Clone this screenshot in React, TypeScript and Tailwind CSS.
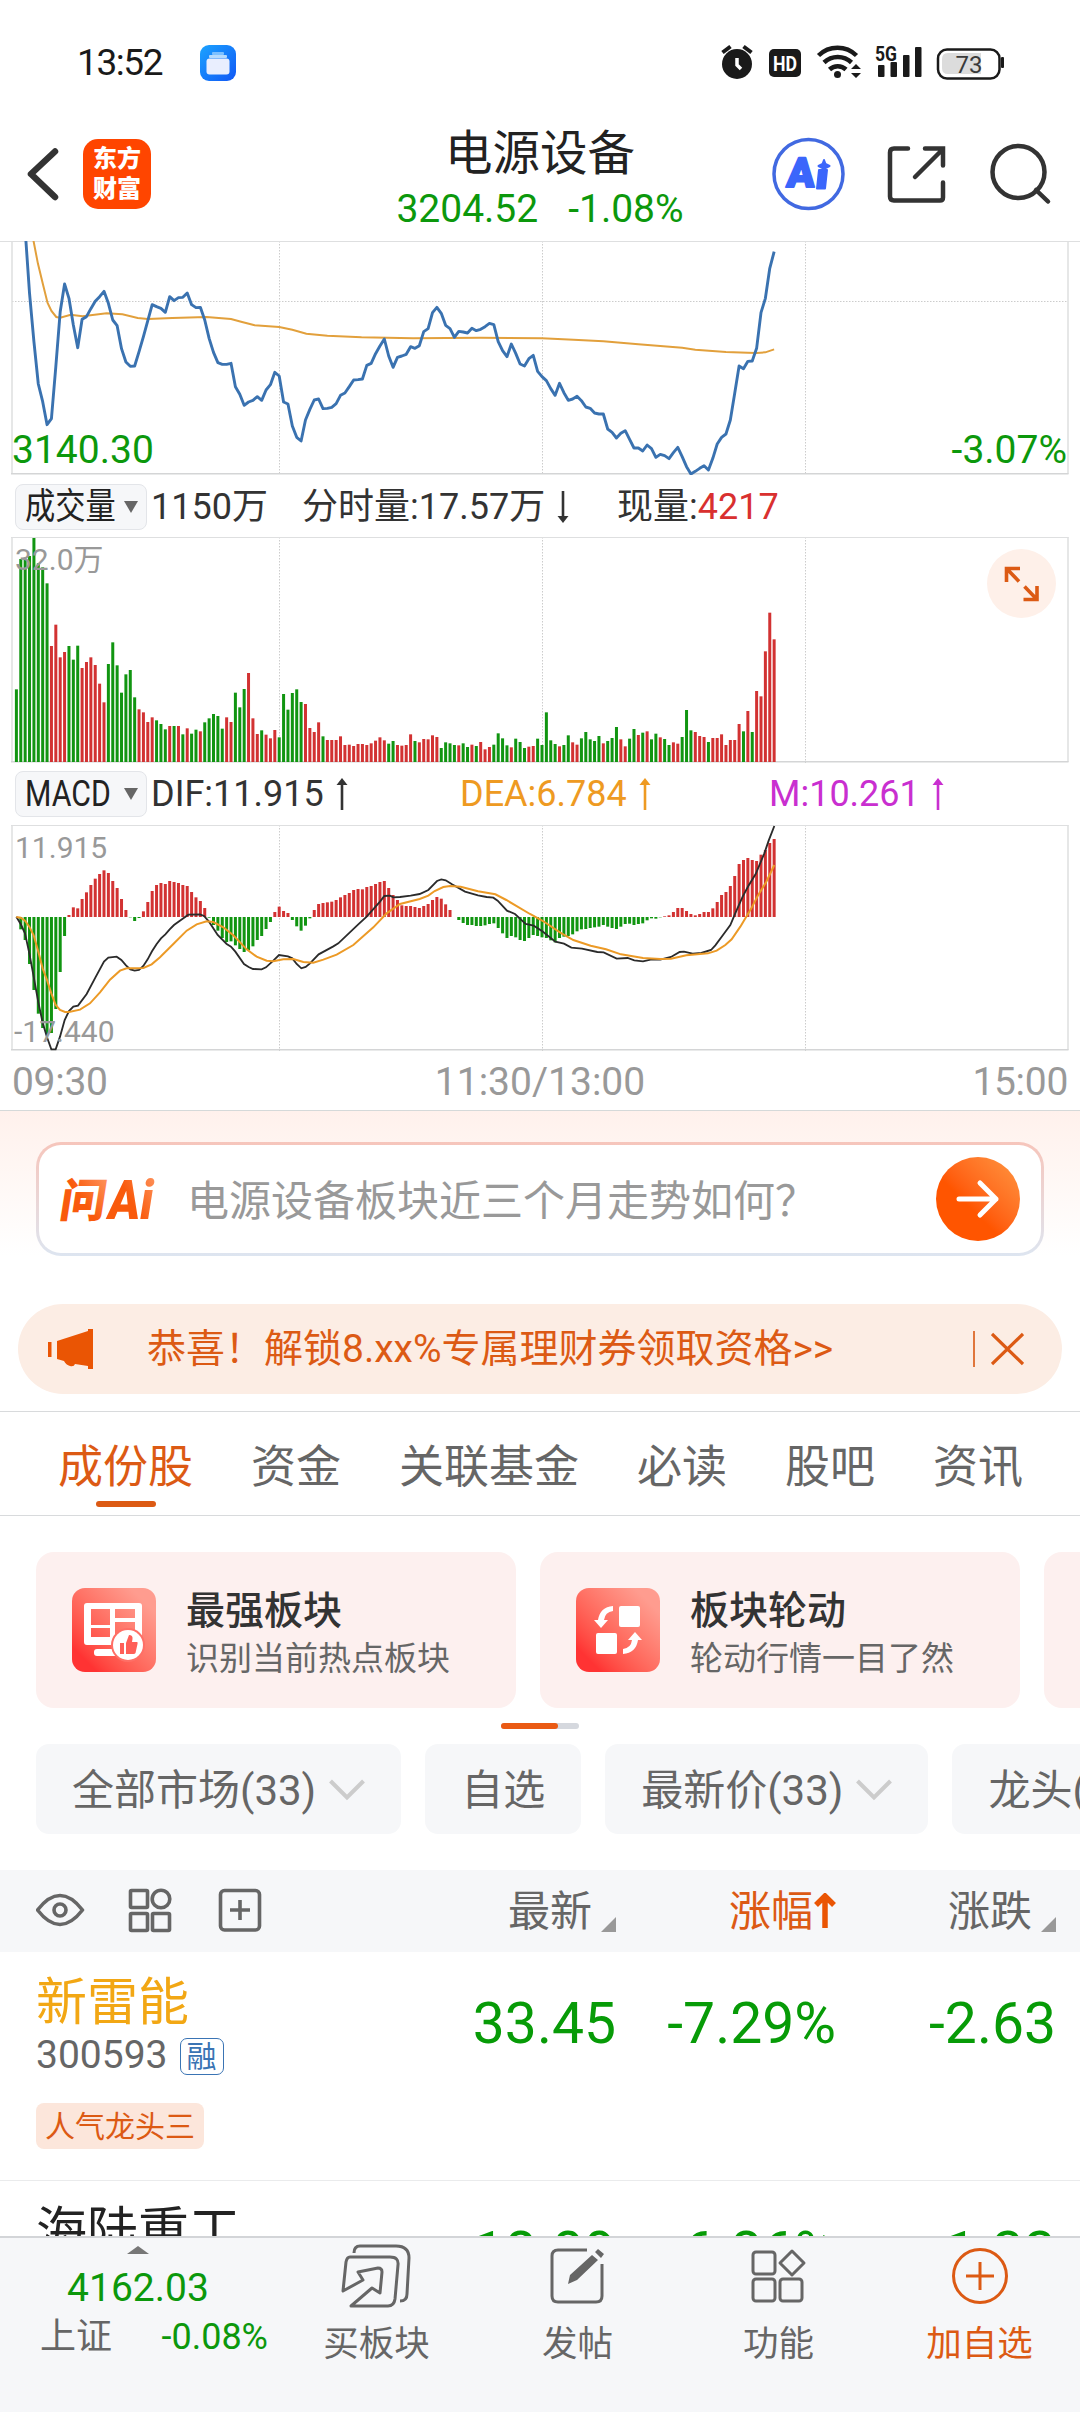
import type { ReactNode } from 'react'
import clsx from 'clsx'

// Minute data. Values are vertical positions in thirds of a pixel.
const STEP = 4.38
const X0 = 16.4

const price = [
    -400, -250, 0, 190, 335, 462, 515, 584, 566, 410, 245, 162, 205, 285, 353, 268, 260, 236, 214, 200,
    184, 220, 270, 287, 356, 396, 409, 408, 365, 320, 272, 224, 230, 235, 247, 200, 212, 203, 202, 189,
    224, 233, 232, 270, 325, 367, 398, 403, 403, 400, 470, 493, 526, 516, 511, 500, 511, 480, 464, 427,
    438, 516, 522, 588, 622, 633, 570, 538, 510, 507, 536, 535, 532, 521, 496, 489, 470, 450, 449, 447,
    406, 400, 371, 348, 327, 378, 412, 382, 378, 373, 350, 355, 347, 305, 296, 248, 232, 250, 286, 296,
    322, 304, 306, 309, 295, 302, 298, 290, 280, 284, 335, 362, 380, 342, 370, 402, 408, 386, 376, 424,
    440, 452, 476, 496, 460, 488, 511, 507, 499, 512, 531, 535, 549, 552, 552, 597, 607, 624, 610, 602,
    628, 654, 654, 663, 645, 656, 682, 673, 677, 686, 668, 652, 680, 710, 732, 724, 715, 707, 720, 685,
    642, 622, 612, 570, 490, 408, 416, 394, 393, 355, 248, 205, 115, 65
]

const average = [
    [3.9, 32], [4.9, 100], [6.1, 165], [7.1, 218], [8, 243], [9.1, 261], [10, 263], [12.4, 254], [15.1, 259],
    [20.6, 250], [24.2, 253], [27.7, 264], [30, 267], [35.6, 264], [43.4, 261], [49, 267], [51.3, 275],
    [54.4, 286], [60, 291], [63, 299], [66.2, 311], [71, 317], [78.8, 322], [90.6, 325], [106, 323], [120, 325],
    [127.2, 329], [134, 334], [142, 343], [152, 353], [155, 359], [162, 366], [167, 368], [169, 369], [171, 367], [173, 358]
]

// negative = falling minute (green), positive = rising minute (red)
const volumes = [
    -478, -87, -90, -78, -24, -100, -112, -160, 348, 284, 382, 366, -348, -389, -347, 414, 396, 382, 405, 461,
    517, -402, -337, -406, -488, -433, -420, -502, 538, 547, 576, 562, -571, -582, -598, 588, -588, 588, -613, 595,
    -611, -599, 604, -577, -565, -552, -558, -596, 562, 576, -488, -532, -477, 429, 565, 612, -601, 614, 625, 600,
    -622, -492, -539, -489, -478, -516, 522, 594, 606, 577, -619, 630, 630, 630, 619, 645, 644, 648, 642, 642,
    645, 640, 632, 622, 631, -641, -633, 645, 647, 645, 613, -633, 637, 627, 628, 616, 621, -654, -637, -640,
    -645, 646, -640, -651, 644, -648, 636, 658, 651, -644, -610, -625, -646, 652, -626, -636, -654, 650, 648, -626,
    -645, -547, -631, -642, 649, -645, -616, 637, 644, -625, -606, -628, -633, -618, 640, -633, -624, -591, 628, 649,
    -626, -597, 615, -608, 604, -628, -611, 622, -627, -645, 637, 641, -621, -540, -601, 606, 618, 621, -636, 624,
    624, 613, 645, 630, 630, 582, -604, 543, -606, 483, 499, 364, 248, 328
]

const macd = [
    321, 358, 390, 462, 540, 611, 654, 672, 669, 597, 486, 378, 315, 292, 295, 267, 247, 225, 206, 192,
    181, 189, 213, 234, 267, 300, 322, 333, 324, 304, 276, 243, 225, 219, 222, 213, 216, 219, 225, 228,
    246, 262, 273, 294, 323, 345, 362, 384, 396, 394, 406, 417, 426, 421, 409, 390, 378, 357, 336, 306,
    290, 303, 309, 330, 349, 362, 347, 325, 300, 282, 279, 277, 275, 270, 262, 255, 249, 240, 237, 238,
    231, 228, 222, 216, 213, 234, 255, 270, 286, 288, 288, 291, 294, 288, 282, 270, 261, 266, 283, 300,
    321, 330, 339, 345, 345, 348, 348, 346, 342, 340, 354, 370, 384, 378, 382, 390, 393, 384, 375, 378,
    382, 384, 391, 397, 384, 380, 378, 373, 364, 358, 357, 354, 352, 350, 345, 350, 354, 357, 350, 342,
    341, 345, 342, 340, 331, 325, 326, 322, 319, 316, 306, 294, 294, 303, 312, 316, 312, 306, 306, 295,
    276, 255, 246, 228, 198, 162, 150, 144, 150, 153, 134, 120, 99, 87
]

const dif =
    '49,320 62,342 75,370 88,430 101,500 115,577 128,638 141,682 154,718 167,718 180,680 194,630 207,603 220,590 234,587 260,552 286,503 312,455 325,443 350,440 364,450 378,466 391,478 404,482 417,480 430,468 443,448 456,424 470,402 483,385 496,373 509,358 522,345 548,326 565,314 600,313 612,318 627,335 653,375 680,402 693,410 706,425 732,462 746,471 759,477 785,478 798,472 820,452 837,435 864,439 877,445 890,462 904,475 917,471 930,460 956,433 1000,409 1015,400 1074,344 1100,320 1140,275 1153,258 1170,257 1180,262 1200,261 1232,257 1259,252 1285,240 1311,213 1324,208 1337,211 1356,223 1395,245 1434,256 1460,261 1480,263 1493,272 1521,302 1545,312 1577,342 1601,347 1627,364 1666,395 1692,401 1714,413 1746,416 1792,426 1811,427 1850,446 1883,444 1903,451 1929,454 1955,448 1981,449 2013,441 2039,426 2052,425 2078,431 2104,429 2133,420 2146,406 2169,375 2191,345 2208,305 2228,260 2245,228 2267,192 2293,130 2306,92 2323,48'
const dea =
    '49,321 62,323 75,332 88,350 101,376 115,425 128,475 141,510 154,550 167,585 180,600 195,606 207,606 240,599 270,580 300,547 330,509 360,482 380,475 400,475 430,474 455,463 480,442 520,402 560,362 590,343 620,334 640,336 670,352 700,376 740,418 770,440 800,452 820,454 850,448 880,447 910,456 940,458 970,449 1010,434 1060,405 1120,352 1160,310 1200,282 1259,267 1285,257 1304,243 1330,231 1350,228 1382,230 1434,244 1486,253 1519,270 1590,312 1629,333 1681,368 1720,390 1772,407 1818,418 1863,433 1929,444 1981,447 2013,446 2059,436 2124,430 2150,422 2176,405 2195,388 2221,350 2254,295 2273,258 2299,215 2323,165'

const GREEN = '#119511'
const RED = '#d23232'

const StatusBar = () => (
    <div className="flex h-[96px] items-start pl-[77px] pr-[76px] pt-[41px] text-[#1a1a1a]">
        <span className="w-[123px] text-[37px] leading-[43px] tracking-[-1.4px]">13:52</span>
        <svg className="mt-1" width="36" height="36" viewBox="0 0 36 36">
            <defs>
                <linearGradient id="app" x1="0" y1="0" x2="1" y2="1">
                    <stop offset="0" stopColor="#1ba3ff" />
                    <stop offset="1" stopColor="#1157f5" />
                </linearGradient>
            </defs>
            <rect width="36" height="36" rx="9" fill="url(#app)" />
            <rect x="12" y="7" width="12" height="3" rx="1" fill="#7cc0ff" />
            <rect x="9" y="10" width="18" height="3" rx="1" fill="#b5dafd" />
            <rect x="6.500" y="13.500" width="23" height="16" rx="3" fill="#e9eefe" />
        </svg>
        <svg className="ml-auto" width="284" height="44" viewBox="720 41 284 44">
            <g fill="#1a1a1a">
                <circle cx="737" cy="64" r="15" />
                <path d="M722.500 52.500l8-6M751.500 52.500l-8-6" stroke="#1a1a1a" strokeWidth="4" />
                <rect x="769" y="49" width="32" height="28" rx="5" />
                <circle cx="837.500" cy="74.500" r="3.500" />
                <rect x="878" y="65" width="6.500" height="12" rx="1" />
                <rect x="890.500" y="62" width="6.500" height="15" rx="1" />
                <rect x="903" y="55" width="6.500" height="22" rx="1" />
                <rect x="915" y="47" width="6.500" height="30" rx="1" />
                <path d="M851 69l5-5 5 5zM851 73l5 5 5-5z" />
                <rect x="1001" y="57" width="3" height="11" rx="1" />
            </g>
            <path d="M737 58v7l4 4" fill="none" stroke="#fff" strokeWidth="3.500" />
            <g fill="none" stroke="#1a1a1a" strokeWidth="4.500">
                <path d="M818.500 55.500a27 27 0 0 1 38 0M824 62.500a20 20 0 0 1 27.500 0M829.500 69.500a12 12 0 0 1 16.500 0" />
            </g>
            <text x="785" y="70.500" fontSize="20" fontWeight="700" fill="#fff" textAnchor="middle" textLength="24" lengthAdjust="spacingAndGlyphs">HD</text>
            <text x="875" y="60.500" fontSize="21" fontWeight="700" fill="#1a1a1a" textLength="22" lengthAdjust="spacingAndGlyphs">5G</text>
            <rect x="938" y="49.500" width="61.500" height="29" rx="9" fill="#fff" stroke="#1a1a1a" strokeWidth="2.500" />
            <path d="M981 53h-33q-6 0-6 6v9q0 6 6 6h33z" fill="#dcdcdc" />
            <text x="969" y="72.500" fontSize="24" fill="#3a3a3a" textAnchor="middle">73</text>
        </svg>
    </div>
)

const Header = () => (
    <div className="flex h-[145px] items-start justify-between pl-[24px] pr-[27px]">
        <div className="flex w-[372px] items-center pt-[43px]">
            <svg width="38" height="68" viewBox="24 140 38 68">
                <path d="M55 151.500l-24 22.500 24 23" fill="none" stroke="#333" strokeWidth="6.500" strokeLinecap="round" strokeLinejoin="round" />
            </svg>
            <div className="ml-[21px] flex h-[70px] w-[68px] flex-col items-center justify-center rounded-[15px] bg-[#ff4500] text-[24px] font-black leading-[30px] text-white">
                <span>东方</span>
                <span>财富</span>
            </div>
        </div>
        <div className="flex flex-col items-center pt-[28px]">
            <span className="text-[47.500px] leading-[60px] text-[#222]">电源设备</span>
            <div className="flex gap-[30px] text-[39px] leading-[50px] text-[#0c980c]">
                <span>3204.52</span>
                <span>-1.08%</span>
            </div>
        </div>
        <div className="flex w-[369px] justify-end pt-[40px]">
            <svg width="284" height="76" viewBox="769 136 284 76">
                <circle cx="808.500" cy="174" r="34.500" fill="#fff" stroke="#4169e1" strokeWidth="3.500" />
                <g fill="#3b66fb" stroke="#3b66fb" strokeLinejoin="round" strokeWidth="2">
                    <text x="786" y="187" fontSize="41" fontWeight="900" transform="skewX(-4)" style={{ transformOrigin: '786px 187px' }}>A</text>
                    <path d="M819 170h8l-2 18.500h-8z" />
                    <path d="M824 160l1.500 4 4 2-4 2-1.500 3.500-1.500-3.500-4-2 4-2z" />
                </g>
                <g fill="none" stroke="#333" strokeWidth="4.500" strokeLinecap="round">
                    <path d="M908 148.500h-14q-4 0-4 4v44q0 4 4 4h46q3 0 3-3v-15M925 148.500h18v17M942 150l-27 27" />
                    <circle cx="1018.500" cy="172" r="26" />
                    <path d="M1036 190l12 11.500" />
                </g>
            </svg>
        </div>
    </div>
)

interface PlotProps {
    height: number
    strong?: boolean
    children?: ReactNode
}

// Plot frame with the three session quarter lines
const Plot = ({ height, strong, children }: PlotProps) => (
    <svg className="block" width="1080" height={height} viewBox={`0 0 1080 ${height}`}>
        <g stroke="#ccc" strokeWidth="1" strokeDasharray="1.500 1.500">
            <path d={`M279.500 0V${height}M542.500 0V${height}M805.500 0V${height}`} />
            {strong && <path d="M12 60.500H1068" />}
        </g>
        <path d={`M12 0V${height - 1}M1068 0V${height - 1}`} stroke="#dedfe0" strokeWidth="1.500" />
        <path d={`M11 ${height - 1.200}H1068.500`} stroke="#d4d5d6" strokeWidth="1.600" />
        <path d={strong ? 'M0 .5H1080' : 'M11 .5H1068.500'} stroke="#dedfe0" />
        {children}
    </svg>
)

const PriceChart = () => (
    <Plot height={234} strong>
        <polyline
            points={average.map(([i, y]) => `${X0 + i * STEP},${(y - 33) / 3}`).join(' ')}
            fill="none" stroke="#e2a03c" strokeWidth="2"
        />
        <polyline
            points={price.map((y, i) => `${X0 + i * STEP},${(y - 33) / 3}`).join(' ')}
            fill="none" stroke="#3a72b0" strokeWidth="2.900" strokeLinejoin="round"
        />
        <text x="12" y="222" fontSize="39" fill="#0c980c">3140.30</text>
        <text x="1067" y="222" fontSize="39" fill="#0c980c" textAnchor="end">-3.07%</text>
    </Plot>
)

const VolumeChart = () => (
    <Plot height={226}>
        {volumes.map((v, i) => {
            const top = (Math.abs(v) - 21) / 3
            return <rect key={i} x={X0 + i * STEP - 1.5} y={top} width="3" height={225 - top} fill={v < 0 ? GREEN : RED} />
        })}
        <text x="15" y="33" fontSize="30" fill="#999">32.0万</text>
        <circle cx="1021.500" cy="46.500" r="34.500" fill="#fef0e9" />
        <path d="M1006.500 45V31.500H1020M1007 32l12 12.500M1037 49v13.500H1023.500M1036.500 62l-12-12.500" fill="none" stroke="#dc5a14" strokeWidth="3.600" />
    </Plot>
)

const MacdChart = () => (
    <Plot height={226}>
        {macd.map((y, i) => (
            <rect
                key={i}
                x={X0 + i * STEP - 1.5}
                y={(Math.min(y, 321) - 45) / 3}
                width="3"
                height={Math.abs(y - 321) / 3}
                fill={y > 321 ? GREEN : RED}
            />
        ))}
        <g transform="scale(0.33333) translate(0 -45)" fill="none">
            <polyline points={dif} stroke="#2b2b2b" strokeWidth="5.500" />
            <polyline points={dea} stroke="#ec9a26" strokeWidth="6" />
        </g>
        <text x="15" y="33" fontSize="30" fill="#999">11.915</text>
        <text x="14" y="217" fontSize="30" fill="#999">-17.440</text>
    </Plot>
)

const Arrow = ({ down }: { down?: boolean }) => (
    <svg className={clsx('inline-block', down && 'rotate-180')} width="12" height="32" viewBox="0 0 12 32">
        <path d="M6 5v27" stroke="currentColor" strokeWidth="2.600" />
        <path d="M6 0l5.500 7h-11z" fill="currentColor" />
    </svg>
)

const IndicatorSelect = ({ label }: { label: string }) => (
    <button className="ml-[15px] mr-[4px] flex h-[46px] w-[132px] items-center justify-between rounded-lg border border-[#e3e5e9] bg-[#f6f7f9] pl-[9px] pr-[8px] text-[#222]">
        <span className="w-[88px] origin-left scale-x-[0.84] whitespace-nowrap">{label}</span>
        <svg width="14" height="12" viewBox="0 0 14 12"><path d="M0 0h14l-7 12z" fill="#666" /></svg>
    </button>
)

const Charts = () => (
    <div>
        <PriceChart />
        <div className="flex h-[62px] items-center pt-[1px] text-[36px] text-[#333]">
            <IndicatorSelect label="成交量" />
            <span className="w-[151px] whitespace-nowrap">1150万</span>
            <span className="flex w-[315px] items-center gap-[12px] whitespace-nowrap">分时量:17.57万<Arrow down /></span>
            <span>现量:<span className="text-[#d9302f]">4217</span></span>
        </div>
        <VolumeChart />
        <div className="flex h-[62px] items-center text-[36px] text-[#333]">
            <IndicatorSelect label="MACD" />
            <span className="flex w-[309px] items-center gap-[12px]">DIF:11.915<Arrow /></span>
            <span className="flex w-[309px] items-center gap-[12px] text-[#ee9a22]">DEA:6.784<Arrow /></span>
            <span className="flex items-center gap-[12px] text-[#c92fd0]">M:10.261<Arrow /></span>
        </div>
        <MacdChart />
        <div className="flex h-[60px] items-center justify-between border-b border-[#d5d9d9] pl-[12px] pr-[12px] pt-[3px] text-[39px] text-[#999]">
            <span className="w-[160px] tracking-[-0.3px]">09:30</span>
            <span>11:30/13:00</span>
            <span className="w-[160px] text-right tracking-[-0.3px]">15:00</span>
        </div>
    </div>
)

const AskAi = () => (
    <div className="h-[193px] bg-linear-to-b from-[#fff1ec] to-white to-75% px-[36px] pt-[31px]">
        <div className="rounded-[25px] bg-linear-to-b from-[#f6c5bb] to-[#dde5f0] p-[3px]">
            <div className="flex h-[108px] items-center rounded-[22px] bg-white pl-[12px] pr-[21px]">
                <svg width="116" height="76" viewBox="-6 -12 116 76">
                    <defs>
                        <linearGradient id="ask" x1="0" y1="1" x2="1" y2="0">
                            <stop offset="0.500" stopColor="#f95a0c" />
                            <stop offset="1" stopColor="#ff9d6b" />
                        </linearGradient>
                    </defs>
                    <g fill="url(#ask)" fontWeight="900" transform="skewX(-9) translate(5 0)">
                        <text x="3" y="44" fontSize="46">问</text>
                        <text x="51" y="46" fontSize="55" textLength="45" lengthAdjust="spacingAndGlyphs">Ai</text>
                    </g>
                </svg>
                <span className="ml-[20px] pt-[4px] text-[42px] text-[#999]">电源设备板块近三个月走势如何？</span>
                <div className="ml-auto flex h-[84px] w-[84px] items-center justify-center rounded-full bg-linear-to-bl from-[#ff8c38] from-10% to-[#ff5500] to-60%">
                    <svg width="44" height="40" viewBox="0 0 44 40">
                        <path d="M3 20h37M24 4l16 16-16 16" fill="none" stroke="#fff" strokeWidth="5" strokeLinecap="round" strokeLinejoin="round" />
                    </svg>
                </div>
            </div>
        </div>
    </div>
)

const Banner = () => (
    <div className="px-[18px] pb-[17px]">
        <div className="flex h-[90px] items-center rounded-full bg-[#fcede4] pl-[29px] pr-[38px] text-[#dc5a14]">
            <svg width="46" height="40" viewBox="0 0 46 40" fill="#ea5504">
                <path d="M1 13h3.500v15H1zM10 12L41 2V0h5v40h-5v-3l-13-2q-1 3-5 2t-6-5l-7-2z" />
            </svg>
            <span className="ml-[54px] text-[39px]">恭喜！解锁8.xx%专属理财券领取资格&gt;&gt;</span>
            <div className="ml-auto h-[36px] w-[2px] bg-[#e0763c]" />
            <svg className="ml-[16px]" width="33" height="34" viewBox="0 0 33 34">
                <path d="M1 2l31 30M32 2L1 32" stroke="#dc5a14" strokeWidth="3.200" />
            </svg>
        </div>
    </div>
)

const tabs = ['成份股', '资金', '关联基金', '必读', '股吧', '资讯']

const Tabs = () => (
    <div className="flex h-[105px] items-start justify-between border-y border-[#d8dadc] pl-[58px] pr-[57px] pt-[23px]">
        {tabs.map((tab, i) => (
            <div key={tab} className={clsx('flex flex-col items-center text-[45px] leading-[66px]', i === 0 ? 'text-[#dc5a14]' : 'text-[#666]')}>
                {tab}
                {i === 0 && <div className="h-[6px] w-[60px] rounded-full bg-[#dc5a14]" />}
            </div>
        ))}
    </div>
)

const IconBoard = () => (
    <svg width="84" height="84" viewBox="0 0 84 84">
        <path fill="#fff" fillRule="evenodd" d="M15 15h52q3 0 3 3v37q0 2-3 2H15q-3 0-3-3V18q0-3 3-3zM19 21v16h19V21zM43 21v9h20v-9zM19 40v9h19v-9zM43 34v13h20V34z" />
        <rect x="22" y="61" width="24" height="7" rx="3" fill="#fff" />
        <circle cx="56" cy="57" r="17" fill="#ff6f66" />
        <circle cx="56" cy="57" r="15" fill="#fff" />
        <path fill="#ff5f58" d="M48 55h4v11h-4zM54 55l3-8q4 0 3.500 4l-.5 3h5q1 0 .5 2l-2 9q-.5 1-2 1h-7.500z" />
    </svg>
)

const IconRotate = () => (
    <svg width="84" height="84" viewBox="0 0 84 84" fill="#fff">
        <rect x="43" y="18" width="21" height="21" rx="2" />
        <rect x="20" y="45" width="21" height="21" rx="2" />
        <path d="M37 18v5q-8 1-9 9h4l-7 8-7-8h4q2-13 15-14zM47 66v-5q8-1 9-9h-4l7-8 7 8h-4q-2 13-15 14z" />
    </svg>
)

const boards = [
    { title: '最强板块', desc: '识别当前热点板块', icon: <IconBoard /> },
    { title: '板块轮动', desc: '轮动行情一目了然', icon: <IconRotate /> },
    { title: '', desc: '', icon: null }
]

const Boards = () => (
    <div className="pl-[36px] pt-[36px]">
        <div className="flex gap-[24px]">
            {boards.map((b, i) => (
                <div key={i} className="flex h-[156px] w-[480px] shrink-0 items-center rounded-[18px] bg-[#fdf0ef] pl-[36px]">
                    {b.icon && (
                        <div className="h-[84px] w-[84px] rounded-[13px] bg-linear-to-bl from-[#ff9c8f] from-15% to-[#ff3333] to-85%">{b.icon}</div>
                    )}
                    <div className="ml-[30px] flex flex-col pt-[7px]">
                        <span className="text-[39px] font-medium leading-[50px] text-[#333]">{b.title}</span>
                        <span className="text-[33px] leading-[46px] text-[#666]">{b.desc}</span>
                    </div>
                </div>
            ))}
        </div>
        <div className="ml-[465px] mt-[15px] h-[6px] w-[78px] rounded-full bg-[#d5d8de]">
            <div className="h-full w-[57px] rounded-full bg-[#ea5a14]" />
        </div>
    </div>
)

const chips = [
    { label: '全部市场(33)', arrow: true },
    { label: '自选', arrow: false },
    { label: '最新价(33)', arrow: true },
    { label: '龙头(33)', arrow: true }
]

const Chips = () => (
    <div className="mt-[15px] flex gap-[24px] pl-[36px]">
        {chips.map(({ label, arrow }) => (
            <div key={label} className="flex h-[90px] shrink-0 items-center rounded-[13px] bg-[#f6f7f9] px-[36px] pt-[2px] text-[42px] text-[#666]">
                {label}
                {arrow && (
                    <svg className="ml-[13px]" width="36" height="22" viewBox="0 0 36 22">
                        <path d="M1.500 2L18 18.500 34.500 2" fill="none" stroke="#ccc" strokeWidth="4" />
                    </svg>
                )}
            </div>
        ))}
    </div>
)

const SortMark = () => (
    <svg className="ml-[9px] mt-[26px]" width="15" height="15" viewBox="0 0 15 15"><path d="M15 0v15H0z" fill="#999" /></svg>
)

const TableHead = () => (
    <div className="mt-[36px] flex h-[82px] items-center bg-[#f6f7f9] pl-[36px] pr-[24px] text-[42px] text-[#666]">
        <svg width="226" height="48" viewBox="36 1887 226 48" fill="none" stroke="#666" strokeWidth="3.600">
            <path d="M37.500 1910q22.500-29 45 0q-22.500 29-45 0z" strokeLinejoin="round" />
            <circle cx="60" cy="1910" r="6" />
            <rect x="130.500" y="1890.500" width="17" height="17" rx="1" />
            <circle cx="161" cy="1899" r="8.800" />
            <rect x="130.500" y="1913.500" width="17" height="17" rx="1" />
            <rect x="152.500" y="1913.500" width="17" height="17" rx="1" />
            <rect x="220.500" y="1890.500" width="39" height="39.500" rx="4" />
            <path d="M230 1910h20M240 1900v20" />
        </svg>
        <div className="flex flex-1 items-center justify-end">最新<SortMark /></div>
        <div className="flex w-[220px] items-center justify-end text-[#dc5a14]">
            涨幅
            <svg className="ml-[1px]" width="22" height="36" viewBox="0 0 22 36">
                <path d="M11 3v32M2 12l9-9 9 9" fill="none" stroke="#ea5504" strokeWidth="5.500" />
            </svg>
        </div>
        <div className="flex w-[220px] items-center justify-end">涨跌<SortMark /></div>
    </div>
)

const stocks = [
    { name: '新雷能', code: '300593', tag: '人气龙头三', price: '33.45', pct: '-7.29%', diff: '-2.63', starred: true },
    { name: '海陆重工', code: '', tag: '', price: '18.09', pct: '-6.86%', diff: '-1.33', starred: false }
]

const StockRow = ({ name, code, tag, price, pct, diff, starred }: (typeof stocks)[number]) => (
    <div className="flex h-[229px] shrink-0 border-b border-[#eaebec] pl-[36px] pr-[24px]">
        <div className="flex flex-1 flex-col items-start pt-[19px]">
            <span className={clsx('text-[51px] leading-[64px]', starred ? 'text-[#f2a714]' : 'text-[#222]')}>{name}</span>
            {code && (
                <div className="flex items-center text-[39px] leading-[40px] text-[#666]">
                    {code}
                    <span className="ml-[12px] mt-[3px] flex h-[37px] w-[44px] items-center justify-center rounded-[7px] border-[1.500px] border-[#3a74b4] text-[30px] text-[#3a74b4]">融</span>
                </div>
            )}
            {tag && <span className="mt-[28px] h-[46px] rounded-[8px] bg-[#fce6db] px-[9px] text-[30px] leading-[47px] text-[#dc5a14]">{tag}</span>}
        </div>
        <div className="flex pt-[37px] text-right text-[57px] leading-[70px] text-[#079b07]">
            <span>{price}</span>
            <span className="w-[220px]">{pct}</span>
            <span className="w-[220px]">{diff}</span>
        </div>
    </div>
)

const BottomBar = () => (
    <div className="flex h-[176px] shrink-0 border-t-2 border-[#d3d5d8] bg-[#f6f7f9] text-[35.500px] text-[#666]">
        <div className="flex w-[276px] flex-col items-center pt-[8px]">
            <svg width="22" height="8" viewBox="0 0 22 8"><path d="M11 0l11 8H0z" fill="#777" /></svg>
            <span className="mt-[9px] text-[39px] leading-[50px] text-[#0c980c]">4162.03</span>
            <div className="flex w-[276px] justify-between pl-[40px] pr-[8px] text-[36px] leading-[48px]">
                <span>上证</span>
                <span className="text-[#0c980c]">-0.08%</span>
            </div>
        </div>
        <div className="flex w-[201px] flex-col items-center">
            <svg className="mr-[2px] mt-[6px]" width="70" height="64" viewBox="-1 -1 70 64" fill="none" stroke="#666" strokeWidth="3" strokeLinejoin="round">
                <path d="M12 8q0-7 6-7h36q13 0 13 12l-2 36q0 7-7 7" />
                <path d="M8 12h40q9 0 8 8l-3 34q-1 7-7 7H9l21-18 8 5 2-21q0-4-4-4L16 27l5 8L1 46l3-29q1-5 4-5z" />
            </svg>
            <span className="mt-[10px]">买板块</span>
        </div>
        <div className="flex w-[201px] flex-col items-center">
            <svg className="mt-[9px]" width="56" height="58" viewBox="0 -1 56 58" fill="none" stroke="#666" strokeWidth="3">
                <path d="M37 2H8Q2 2 2 8v40q0 6 6 6h38q6 0 6-6V16" />
                <path d="M18 36l2-9L42 7l6 5-21 20zM45 4l3-3 6 5-3 4z" fill="#666" stroke="none" />
            </svg>
            <span className="mt-[13px]">发帖</span>
        </div>
        <div className="flex w-[201px] flex-col items-center">
            <svg className="mt-[9px]" width="56" height="58" viewBox="0 -1 56 58" fill="none" stroke="#666" strokeWidth="3" strokeLinejoin="round">
                <rect x="2" y="4" width="22" height="22" rx="3" />
                <rect x="2" y="31" width="22" height="22" rx="3" />
                <rect x="29" y="31" width="22" height="22" rx="3" />
                <path d="M41 3l12 12-12 12-12-12z" />
            </svg>
            <span className="mt-[13px]">功能</span>
        </div>
        <div className="flex w-[201px] flex-col items-center text-[#dc5a14]">
            <svg className="mt-[9px]" width="58" height="58" viewBox="0 0 58 58" fill="none" stroke="#dc5a14" strokeWidth="3">
                <circle cx="29" cy="29" r="26.500" />
                <path d="M15 29h28M29 15v28" />
            </svg>
            <span className="mt-[13px]">加自选</span>
        </div>
    </div>
)

const App = () => {
    return (
        <div className="flex h-[2412px] w-[1080px] flex-col overflow-hidden bg-white font-[Roboto,'Noto_Sans_CJK_SC',sans-serif]">
            <StatusBar />
            <Header />
            <Charts />
            <AskAi />
            <Banner />
            <Tabs />
            <Boards />
            <Chips />
            <TableHead />
            <div className="flex min-h-0 flex-1 flex-col overflow-hidden">
                {stocks.map(s => <StockRow key={s.name} {...s} />)}
            </div>
            <BottomBar />
        </div>
    )
}

export default App
